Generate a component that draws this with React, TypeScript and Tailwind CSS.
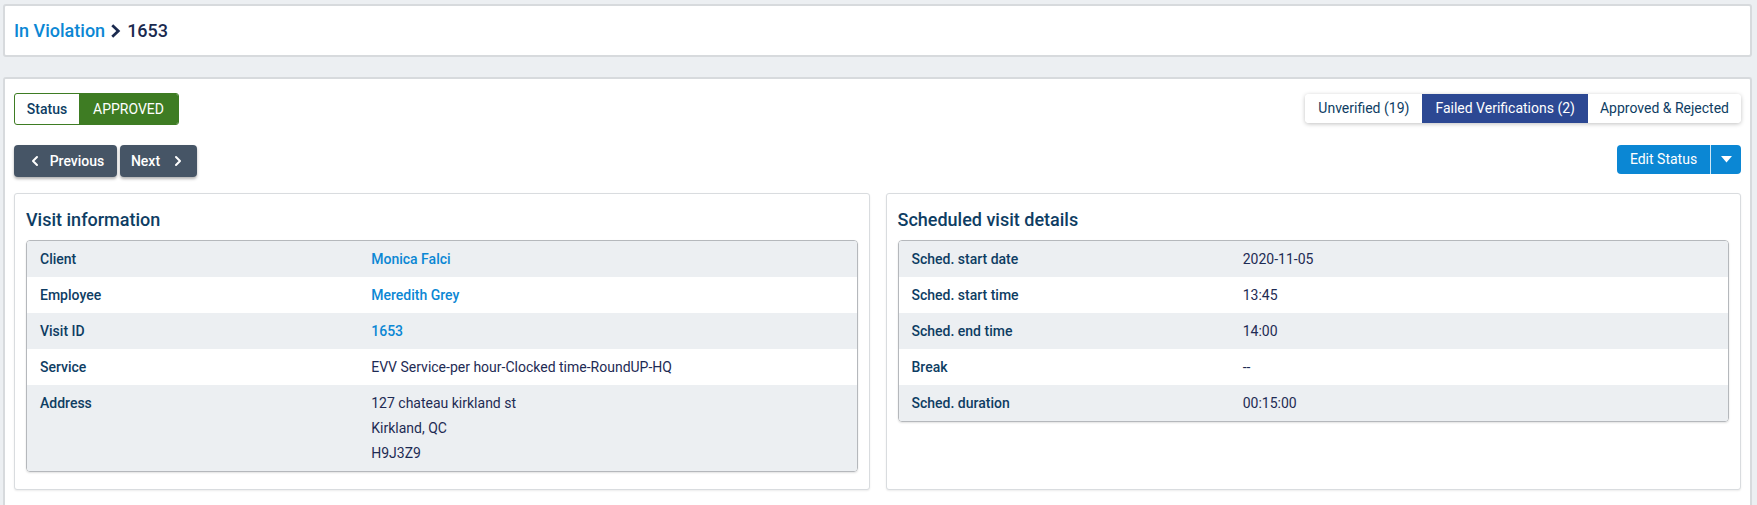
import { ChevronLeft, ChevronRight } from 'lucide-react';

type Row = { label: string; value: string[]; link?: boolean };

const VISIT_ROWS: Row[] = [
  { label: 'Client', value: ['Monica Falci'], link: true },
  { label: 'Employee', value: ['Meredith Grey'], link: true },
  { label: 'Visit ID', value: ['1653'], link: true },
  { label: 'Service', value: ['EVV Service-per hour-Clocked time-RoundUP-HQ'] },
  { label: 'Address', value: ['127 chateau kirkland st', 'Kirkland, QC', 'H9J3Z9'] },
];

const SCHEDULE_ROWS: Row[] = [
  { label: 'Sched. start date', value: ['2020-11-05'] },
  { label: 'Sched. start time', value: ['13:45'] },
  { label: 'Sched. end time', value: ['14:00'] },
  { label: 'Break', value: ['--'] },
  { label: 'Sched. duration', value: ['00:15:00'] },
];

function DetailCard({ title, rows }: { title: string; rows: Row[] }) {
  return (
    <div className="bg-white border border-[#d9dcdf] rounded-[3px] shadow-[0_1px_2px_rgba(0,0,0,0.08)] px-[11px] pt-[12px] pb-[17px]">
      <h2 className="text-[18px] leading-[28px] font-medium text-[#0e3d63] mb-[6px]">{title}</h2>
      <div className="border border-[#b5b8bc] rounded-[4px] overflow-hidden shadow-[0_1px_2px_rgba(0,0,0,0.12)]">
        {rows.map((row, i) => (
          <div
            key={row.label}
            className={`flex py-[8px] ${i % 2 === 0 ? 'bg-[#eceff2]' : 'bg-white'}`}
          >
            <div className="w-[41.5%] shrink-0 pl-[13px] text-[14px] leading-[20px] font-medium text-[#0e3d63]">
              {row.label}
            </div>
            <div className="flex flex-col gap-[5px]">
              {row.value.map((v) => (
                <span
                  key={v}
                  className={
                    row.link
                      ? 'text-[14px] leading-[20px] font-medium text-[#0b87d4]'
                      : 'text-[14px] leading-[20px] text-[#1e2b54]'
                  }
                >
                  {v}
                </span>
              ))}
            </div>
          </div>
        ))}
      </div>
    </div>
  );
}

export default function App() {
  return (
    <div
      className="min-h-[505px] bg-[#eceff2] pt-[4px] pl-[3px] pr-[5px]"
      style={{ fontFamily: 'Roboto, "Liberation Sans", sans-serif' }}
    >
      {/* Breadcrumb */}
      <div className="h-[53px] bg-white border-2 border-[#d7dadd] rounded-[3px] flex items-center px-[9px]">
        <span className="text-[18px] font-medium text-[#0b87d4]">In Violation</span>
        {/* chunky chevron like the font-icon one */}
        <svg className="mx-[6px] mt-[1px]" width="10" height="14" viewBox="0 0 10 14">
          <path d="M2.2 0.3 L9.3 7 L2.2 13.7 L0.3 11.8 L5.3 7 L0.3 2.2 Z" fill="#1a2a4f" />
        </svg>
        <span className="text-[18px] font-medium text-[#1a2a4f]">1653</span>
      </div>

      {/* Main */}
      <div className="mt-[20px] bg-white border-2 border-[#d7dadd] border-b-0 rounded-t-[3px] px-[9px] pt-[14px] pb-[18px]">
        <div className="flex items-start justify-between">
          <div className="flex h-[32px] border border-[#3e7c23] rounded-[3px] overflow-hidden text-[14px]">
            <div className="w-[64px] flex items-center justify-center font-medium text-[#0e3d63]">Status</div>
            <div className="w-[99px] flex items-center justify-center bg-[#3e7c23] text-white">APPROVED</div>
          </div>
          <div className="mt-[1px] flex h-[29px] rounded-[4px] overflow-hidden shadow-[0_1px_4px_rgba(0,0,0,0.25)] text-[14px]">
            <button className="px-[13px] bg-white text-[#0e3d63]">Unverified (19)</button>
            <button className="px-[13px] bg-[#2c4893] text-white">Failed Verifications (2)</button>
            <button className="px-[12px] bg-white text-[#0e3d63]">Approved &amp; Rejected</button>
          </div>
        </div>

        <div className="mt-[20px] flex items-start justify-between">
          <div className="flex gap-[3px]">
            <button className="h-[32px] w-[103px] flex items-center justify-center gap-[7px] bg-[#465566] text-white text-[14px] font-medium rounded-[4px] shadow-[0_2px_3px_rgba(0,0,0,0.3)]">
              <ChevronLeft className="w-[16px] h-[16px]" strokeWidth={3} />
              Previous
            </button>
            <button className="h-[32px] w-[77px] flex items-center justify-center gap-[10px] bg-[#465566] text-white text-[14px] font-medium rounded-[4px] shadow-[0_2px_3px_rgba(0,0,0,0.3)]">
              Next
              <ChevronRight className="w-[16px] h-[16px]" strokeWidth={3} />
            </button>
          </div>
          <div className="flex h-[29px] rounded-[4px] overflow-hidden bg-[#0b87d4] text-white text-[14px]">
            <button className="w-[93px] flex items-center justify-center">Edit Status</button>
            <div className="w-px bg-white/80" />
            <button className="w-[30px] flex items-center justify-center">
              <svg width="11" height="7" viewBox="0 0 11 7">
                <path d="M0 0 L11 0 L5.5 6.5 Z" fill="white" />
              </svg>
            </button>
          </div>
        </div>

        <div className="mt-[16px] grid grid-cols-2 gap-[16px]">
          <DetailCard title="Visit information" rows={VISIT_ROWS} />
          <DetailCard title="Scheduled visit details" rows={SCHEDULE_ROWS} />
        </div>
      </div>
    </div>
  );
}
